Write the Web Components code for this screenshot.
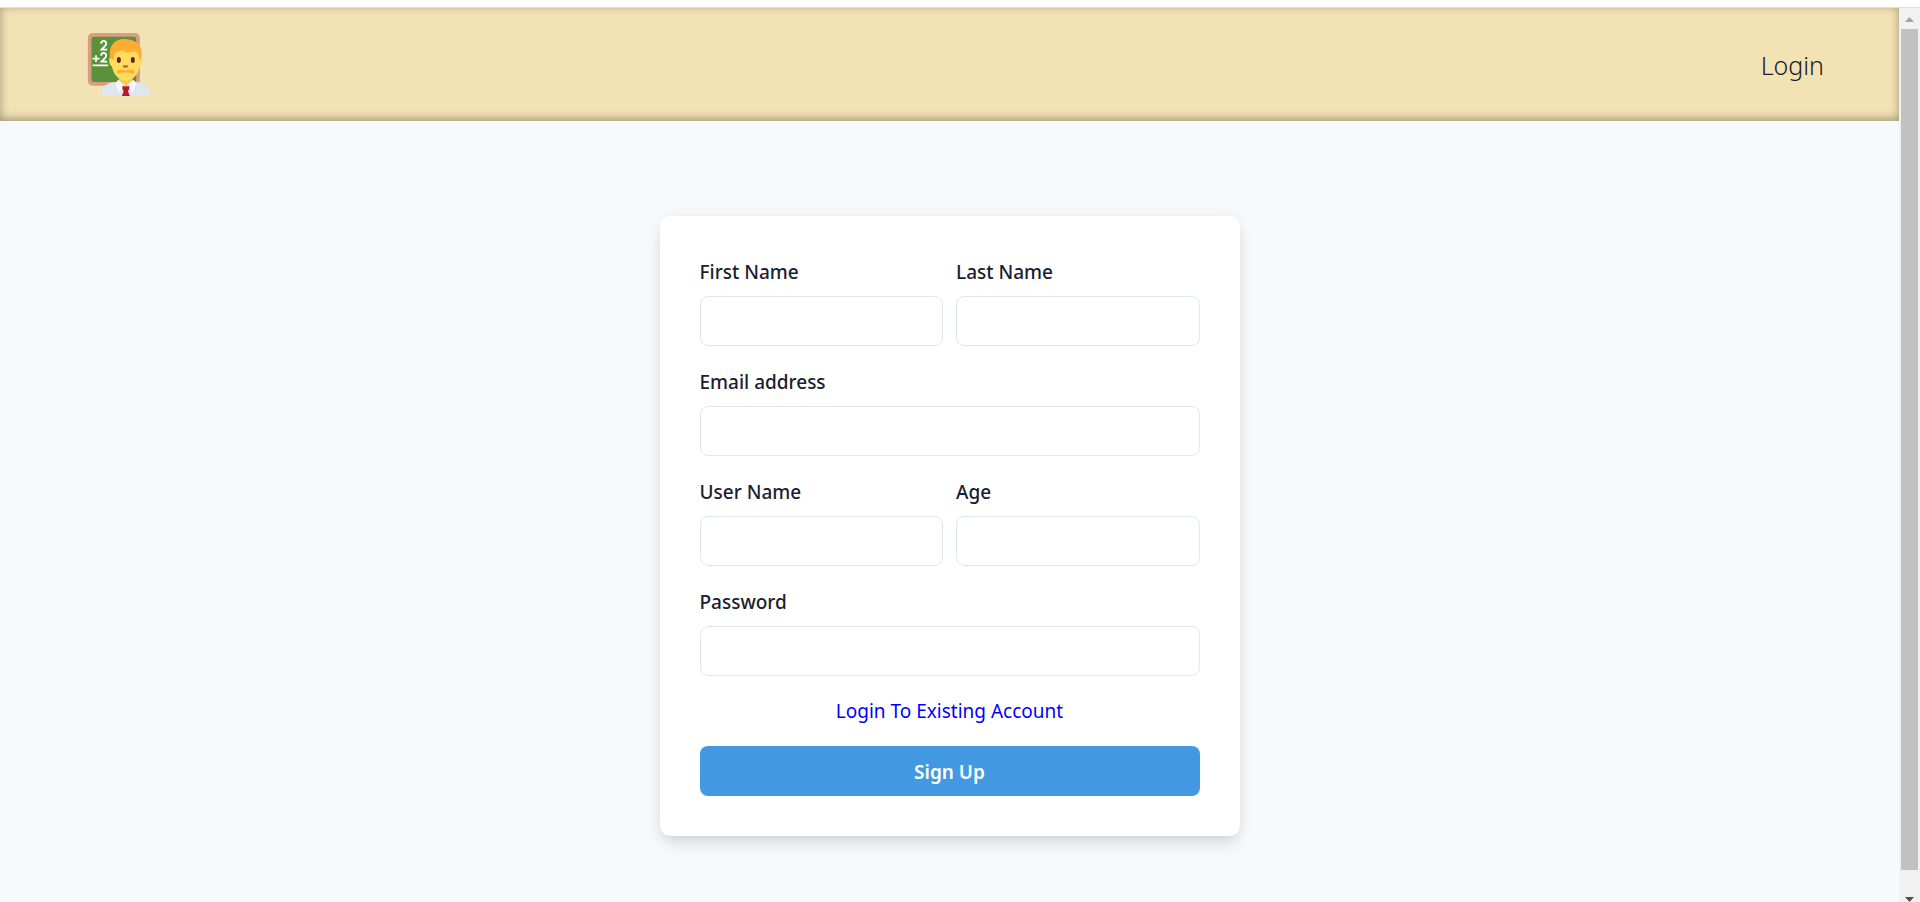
<!DOCTYPE html>
<html lang="en">
<head>
<meta charset="utf-8">
<title>Sign Up</title>
<style>
html, body { margin: 0; }
body { font-family: "Noto Sans", "Segoe UI", sans-serif; font-size: 19px; line-height: 32px; color: #1a202c; background: #fff; }
</style>
</head>
<body>
<app-shell>
  <site-header slot="header"></site-header>
  <signup-card></signup-card>
</app-shell>
<script>
const define = (name, html, setup) => {
  const template = document.createElement('template');
  template.innerHTML = html;
  customElements.define(name, class extends HTMLElement {
    constructor() {
      super();
      this.attachShadow({ mode: 'open' }).append(template.content.cloneNode(true));
    }
    connectedCallback() { if (setup) setup(this, this.shadowRoot); }
  });
};

define('teacher-logo', `
<style>:host { display: block; width: 63px; height: 63px; } svg { display: block; width: 100%; height: 100%; }</style>
<svg viewBox="52 39 188 189" role="img" aria-label="Teacher">
  <rect x="54" y="39" width="156" height="158" rx="15" fill="#d99e82"/>
  <rect x="65" y="50" width="134" height="136" rx="6" fill="#5c913b"/>
  <g fill="none" stroke="#fff" stroke-width="5.5">
    <path d="M94 71c0-11 15-11 15 0c0 7-8 10-14 18h17"/>
    <path d="M94 107c0-11 15-11 15 0c0 7-8 10-14 18h17"/>
    <path d="M68 116h21M78.500 106v20" stroke-width="5"/>
    <path d="M70 136h43" stroke-width="5" stroke-linecap="round"/>
  </g>
  <path d="M96 228v-8c0-20 14-30 34-33h76c20 3 34 13 34 33v8z" fill="#dfe6ed"/>
  <path d="M147 168h41v25c-6 14-35 14-41 0z" fill="#f9ca55"/>
  <path d="M168 61c-27 0-43 20-43 47c-9-2-9 27 1 31c5 25 20 43 42 43s37-18 42-43c10-4 10-33 1-31c0-27-16-47-43-47z" fill="#ffdc5d"/>
  <path d="M120 108c-3-33 17-51 43-51c28 0 53 14 53 43c0 11-4 17-5 23c-2-16-8-23-15-30c-4 4-24 5-39 2c5-1 9-3 12-5c-20 3-27 5-32 9c-5 5-4 14-6 20c-6 2-9-4-11-11z" fill="#ffac33"/>
  <ellipse cx="147" cy="120" rx="6" ry="9" fill="#662113"/><ellipse cx="189" cy="120" rx="6" ry="9" fill="#662113"/>
  <path d="M160 136h15c2 6-3 8-8 8s-10-2-7-8z" fill="#c1694f"/>
  <path d="M141 155c3-7 20-7 27-3c7-4 24-4 26 3l-3 6c-7-5-40-5-47 0z" fill="#ffac33"/>
  <path d="M145 179l23 20 23-20 8 11-10 28-15-15h-12l-16 15-9-28z" fill="#f5f8fa"/>
  <path d="M158 197q10 4 20 0v12l-4 3 6 16h-24l6-16-4-3z" fill="#be1931"/>
  <path d="M162 212h12" stroke="#a0041e" stroke-width="2"/>
</svg>`);

define('site-header', `
<style>
:host { display: flex; align-items: center; justify-content: space-between; box-sizing: border-box; height: 113px; padding: 0 75px 0 87px; background: #f2e2b4; box-shadow: inset 0 -2px 10px rgba(0,0,0,.35); }
a { font-size: 25px; font-weight: 300; line-height: 38px; color: inherit; text-decoration: none; }
</style>
<teacher-logo></teacher-logo>
<nav><a href="#login">Login</a></nav>`);

define('text-field', `
<style>
:host { display: block; min-width: 0; }
label { display: block; margin-bottom: 8px; font-weight: 500; }
input { display: block; box-sizing: border-box; width: 100%; height: 50px; padding: 10px 20px; border: 1px solid #e2e8f0; border-radius: 8px; background: #fff; font: inherit; color: inherit; outline: none; }
</style>
<label for="field"></label><input id="field">`, (host, root) => {
  root.querySelector('label').textContent = host.getAttribute('label');
  root.querySelector('input').type = host.getAttribute('type') || 'text';
});

define('signup-card', `
<style>
:host { display: block; box-sizing: border-box; width: 100%; max-width: 580px; padding: 40px; border-radius: 10px; background: #fff; box-shadow: 0 12px 19px -4px rgba(0,0,0,.1), 0 5px 8px -2px rgba(0,0,0,.05), 0 0 16px rgba(0,0,0,.05); }
form { display: grid; grid-template-columns: 1fr 1fr; gap: 20px 13px; }
.wide { grid-column: 1 / -1; }
a { justify-self: center; line-height: 30px; color: #00f; text-decoration: none; }
button { height: 50px; padding: 2px 0 0; border: 0; border-radius: 8px; background: #4299e1; color: #fff; font: inherit; font-weight: 600; }
</style>
<form>
  <text-field label="First Name"></text-field>
  <text-field label="Last Name"></text-field>
  <text-field class="wide" label="Email address" type="email"></text-field>
  <text-field label="User Name"></text-field>
  <text-field label="Age"></text-field>
  <text-field class="wide" label="Password" type="password"></text-field>
  <a class="wide" href="#login">Login To Existing Account</a>
  <button class="wide" type="button">Sign Up</button>
</form>`);

define('scroll-rail', `
<style>
:host { display: flex; flex-direction: column; align-items: center; box-sizing: border-box; background: #f1f1f1; padding-top: 9px; }
svg { display: block; width: 9px; height: 5px; flex: none; }
.track { flex: 1; width: 17px; margin: 7px 0 6px; padding-bottom: 21px; display: flex; }
.thumb { flex: 1; background: #c1c1c1; }
</style>
<svg viewBox="0 0 9 5"><path d="M0 5L4.500 0L9 5z" fill="#a3a3a3"/></svg>
<div class="track"><div class="thumb"></div></div>
<svg viewBox="0 0 9 5"><path d="M0 0L4.500 5L9 0z" fill="#505050"/></svg>`);

define('app-shell', `
<style>
:host { display: grid; grid-template-columns: 1fr 21px; box-sizing: border-box; min-height: 100vh; border-top: 7px solid #fff; }
.page { display: flex; flex-direction: column; border-top: 1px solid #dadce0; background: #f7fafc; }
main { flex: 1; display: flex; justify-content: center; align-items: flex-start; padding: 95px 20px 66px; }
scroll-rail { border-top: 1px solid #dadce0; }
</style>
<div class="page"><slot name="header"></slot><main><slot></slot></main></div>
<scroll-rail></scroll-rail>`);
</script>
</body>
</html>
